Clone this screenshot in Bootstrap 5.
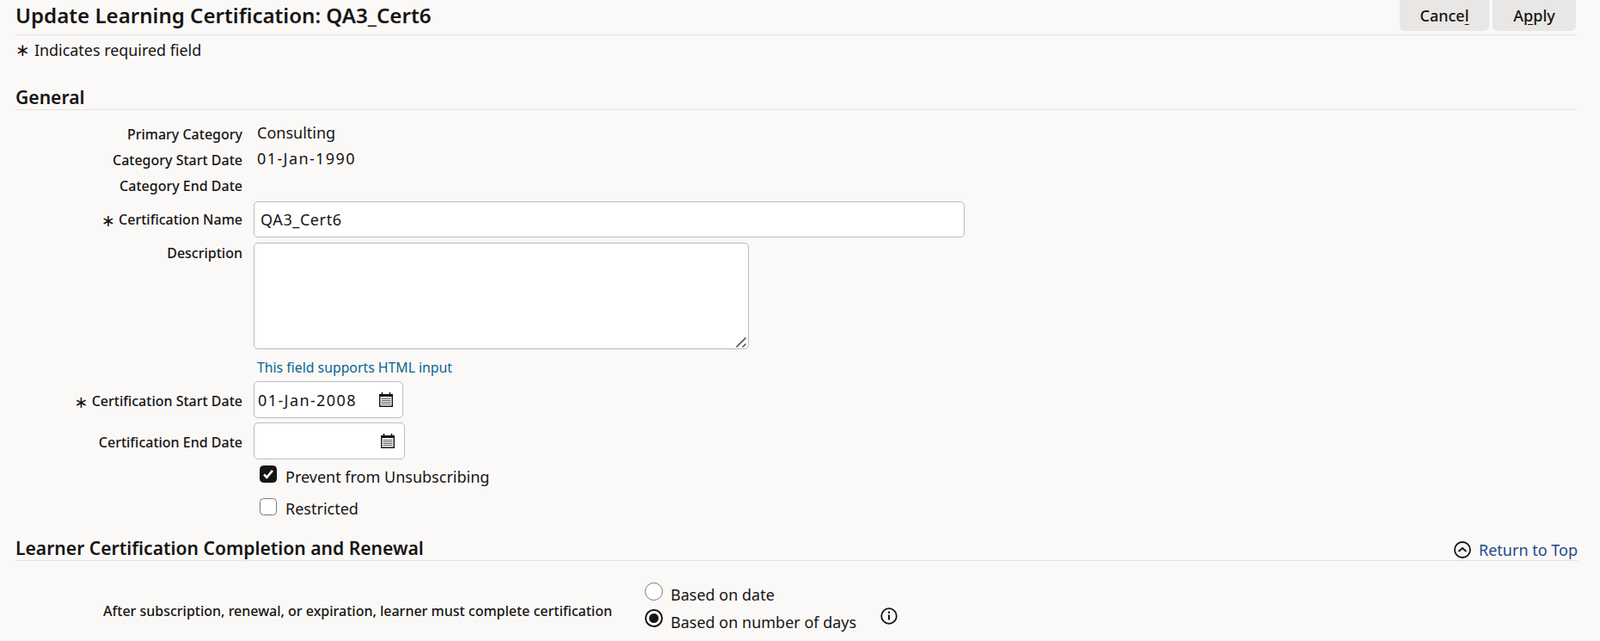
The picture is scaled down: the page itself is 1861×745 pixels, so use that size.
<!DOCTYPE html>
<html lang="en">
<head>
<meta charset="utf-8">
<title>Update Learning Certification</title>
<link href="https://cdn.jsdelivr.net/npm/bootstrap@5.3.0/dist/css/bootstrap.min.css" rel="stylesheet">
<style>
html,body{height:745px;overflow:hidden}
body{background:#fbf9f8;color:#161513;font-family:"Noto Sans","Liberation Sans",sans-serif;font-size:18px;line-height:20px}
.page{padding:0 26px 0 18px}
.pagehead{height:41px;border-bottom:1px solid #e4e2e0}
.pagehead h1{font-size:24.1px;font-weight:600;line-height:30px;margin:3px 0 0;color:#161513}
.actbtn{background:#e9e7e5;border:0;border-radius:0 0 6px 6px;color:#161513;height:36px;font-size:18px;line-height:20px;padding:0;font-weight:500}
.actbtn u{text-underline-offset:3px}
.btncancel{width:104px}.btnapply{width:97px;margin-right:2px}
.reqline{height:20px;margin-top:7px;font-size:17.9px;gap:7px}
.reqstar{font-family:"DejaVu Sans",sans-serif;font-size:20px;line-height:20px;width:15px;text-align:center}
.secthead{border-bottom:1px solid #e4e2e0}
.secthead h2{font-size:21.100px;font-weight:600;line-height:28px;margin:0;color:#161513}
.sectfirst{margin-top:31px}
.sectnext{margin-top:16px}
.lblcol{width:264px;flex:none;text-align:right;font-size:16px;font-weight:500;line-height:20px}
.lblstar{font-family:"DejaVu Sans",sans-serif;font-size:19px;font-weight:400;line-height:20px;vertical-align:-2px}
.fieldrow{display:flex;align-items:center}
.fieldval{margin-left:17px;font-size:18px}
.ro1{height:30px}
.ro1 .lblcol{padding-top:3px}
.rofirst{margin-top:11px}
.datev{letter-spacing:1.4px}
.txtinput,.txtarea,.datebox{border:1px solid #bdbbb9;border-radius:5px;background-color:#fff;box-shadow:none;color:#161513;font-size:18px}
.txtinput{width:827px;height:42px;margin-left:13px;padding:0 7px;letter-spacing:.6px}
.txtarea{width:576px;height:124px;margin-left:13px;display:block;padding:6px;resize:none;background-image:url("data:image/svg+xml,%3csvg xmlns='http://www.w3.org/2000/svg' width='12' height='12'%3e%3cpath d='M0.500 11.500L11.500 0.500M7.500 11.500L11.500 7.500' stroke='%234f5a57' stroke-width='1.600' fill='none'/%3e%3c/svg%3e");background-repeat:no-repeat;background-position:right 2px bottom 1px}
.datebox{height:43px;margin-left:13px;display:flex;align-items:center;justify-content:space-between}
.datebox input{border:0;background:transparent;width:135px;padding:0 0 0 4px;font-size:18px;color:#161513;outline:0;letter-spacing:1.4px}
.datebox svg{margin-right:11px;flex:none}
.rowname{margin-top:5px}
.rowdesc{margin-top:6px}
.desclbl{padding-top:2px}
.hintline{margin-left:281px;margin-top:11px;color:#04668f;font-size:15.8px;line-height:20px}
.rowstart{margin-top:6px}
.rowend{margin-top:5px}
.rowstart .lblcol,.rowend .lblcol{padding-top:3px}
.chkrow{margin-left:284px;display:flex;align-items:center;gap:10px;height:36px}
.chkfirst{margin-top:-1px}
.chkrow+.chkrow{margin-top:2px}
.chkrow label{padding-top:5px}
.chkrow+.chkrow label{padding-top:3px}
.chkrow input{width:20px;height:20px;margin:0;border:1.500px solid #7a7876;border-radius:3px;flex:none}
.chkrow input:checked{background-color:#161513;border-color:#161513;background-image:url("data:image/svg+xml,%3csvg xmlns='http://www.w3.org/2000/svg' viewBox='0 0 20 20'%3e%3cpath d='M4.500 10.500l3.700 3.700 7.300-8.700' fill='none' stroke='%23fff' stroke-width='3'/%3e%3c/svg%3e")}
.radiogroup{margin-left:39px}
.radiorow{display:flex;align-items:center;gap:9px;height:31px}
.radiorow label{padding-top:6px}
.radiorow+.radiorow label{padding-top:8px}
.radiorow input{width:21px;height:21px;margin:0;border:1.500px solid #7a7876;flex:none}
.radiorow input:checked{background-color:#fff;border:2px solid #161513;background-image:url("data:image/svg+xml,%3csvg xmlns='http://www.w3.org/2000/svg' viewBox='-4 -4 8 8'%3e%3ccircle r='2.6' fill='%23161513'/%3e%3c/svg%3e")}
.toplink{color:#1b4a8a;text-decoration:none;font-size:18px;display:flex;align-items:center;gap:9px;padding-bottom:2px}
.blockradio{margin-top:20px}
.lblwide{width:694px;flex:none;text-align:right;font-size:16px;font-weight:500;margin-top:14px}
.infoic{margin-left:28px;margin-top:26px}
.radiogroup{margin-left:38px}
</style>
</head>
<body>
<div class="page">
  <div class="pagehead d-flex justify-content-between">
    <h1>Update Learning Certification: QA3_Cert6</h1>
    <div class="d-flex gap-1">
      <button class="btn actbtn btncancel">Cance<u>l</u></button>
      <button class="btn actbtn btnapply">A<u>p</u>ply</button>
    </div>
  </div>
  <div class="reqline d-flex align-items-center"><span class="reqstar">∗</span><span>Indicates required field</span></div>

  <div class="secthead sectfirst"><h2>General</h2></div>
  <div class="fieldrow ro1 rofirst"><div class="lblcol">Primary Category</div><div class="fieldval">Consulting</div></div>
  <div class="fieldrow ro1"><div class="lblcol">Category Start Date</div><div class="fieldval datev">01-Jan-1990</div></div>
  <div class="fieldrow ro1"><div class="lblcol">Category End Date</div></div>
  <div class="fieldrow rowname"><div class="lblcol"><span class="lblstar">∗</span> Certification Name</div><input class="form-control txtinput" value="QA3_Cert6"></div>
  <div class="d-flex rowdesc"><div class="lblcol desclbl">Description</div><textarea class="form-control txtarea"></textarea></div>
  <div class="hintline">This field supports HTML input</div>
  <div class="fieldrow rowstart"><div class="lblcol"><span class="lblstar">∗</span> Certification Start Date</div><div class="datebox" style="width:174px"><input value="01-Jan-2008"><svg width="16" height="17" viewBox="0 0 16 17"><path d="M.7 2.700h14.600v13.600H.7z" fill="#fff" stroke="#161513" stroke-width="1.400"/><path d="M0 2h16v3H0z" fill="#161513"/><path d="M3.500 0v3.500M12.500 0v3.500" stroke="#161513" stroke-width="1.600"/><path d="M2.500 7.500h11M2.500 9.500h11M2.500 11.500h11M2.500 13.500h11" stroke="#5c5c5c"/></svg></div></div>
  <div class="fieldrow rowend"><div class="lblcol">Certification End Date</div><div class="datebox" style="width:176px"><input value=""><svg width="16" height="17" viewBox="0 0 16 17"><path d="M.7 2.700h14.600v13.600H.7z" fill="#fff" stroke="#161513" stroke-width="1.400"/><path d="M0 2h16v3H0z" fill="#161513"/><path d="M3.500 0v3.500M12.500 0v3.500" stroke="#161513" stroke-width="1.600"/><path d="M2.500 7.500h11M2.500 9.500h11M2.500 11.500h11M2.500 13.500h11" stroke="#5c5c5c"/></svg></div></div>
  <div class="chkrow chkfirst"><input class="form-check-input" type="checkbox" checked><label>Prevent from Unsubscribing</label></div>
  <div class="chkrow"><input class="form-check-input" type="checkbox"><label>Restricted</label></div>

  <div class="secthead sectnext d-flex justify-content-between align-items-end">
    <h2>Learner Certification Completion and Renewal</h2>
    <a href="#" class="toplink"><svg width="20" height="20" viewBox="0 0 20 20"><circle cx="10" cy="10" r="9" fill="none" stroke="#161513" stroke-width="1.800"/><path d="M5.500 12l4.500-4 4.500 4" fill="none" stroke="#161513" stroke-width="1.800"/></svg>Return to Top</a>
  </div>
  <div class="d-flex align-items-center blockradio">
    <div class="lblwide">After subscription, renewal, or expiration, learner must complete certification</div>
    <div class="radiogroup">
      <div class="radiorow"><input class="form-check-input" type="radio" name="r1"><label>Based on date</label></div>
      <div class="radiorow"><input class="form-check-input" type="radio" name="r1" checked><label>Based on number of days</label></div>
    </div>
    <svg class="infoic" width="20" height="20" viewBox="0 0 20 20"><circle cx="10" cy="10" r="8.800" fill="none" stroke="#161513" stroke-width="1.800"/><path d="M10 8.500v6" stroke="#161513" stroke-width="2"/><circle cx="10" cy="5.700" r="1.200" fill="#161513"/></svg>
  </div>
</div>
<script src="https://cdn.jsdelivr.net/npm/bootstrap@5.3.0/dist/js/bootstrap.bundle.min.js"></script>
</body>
</html>
